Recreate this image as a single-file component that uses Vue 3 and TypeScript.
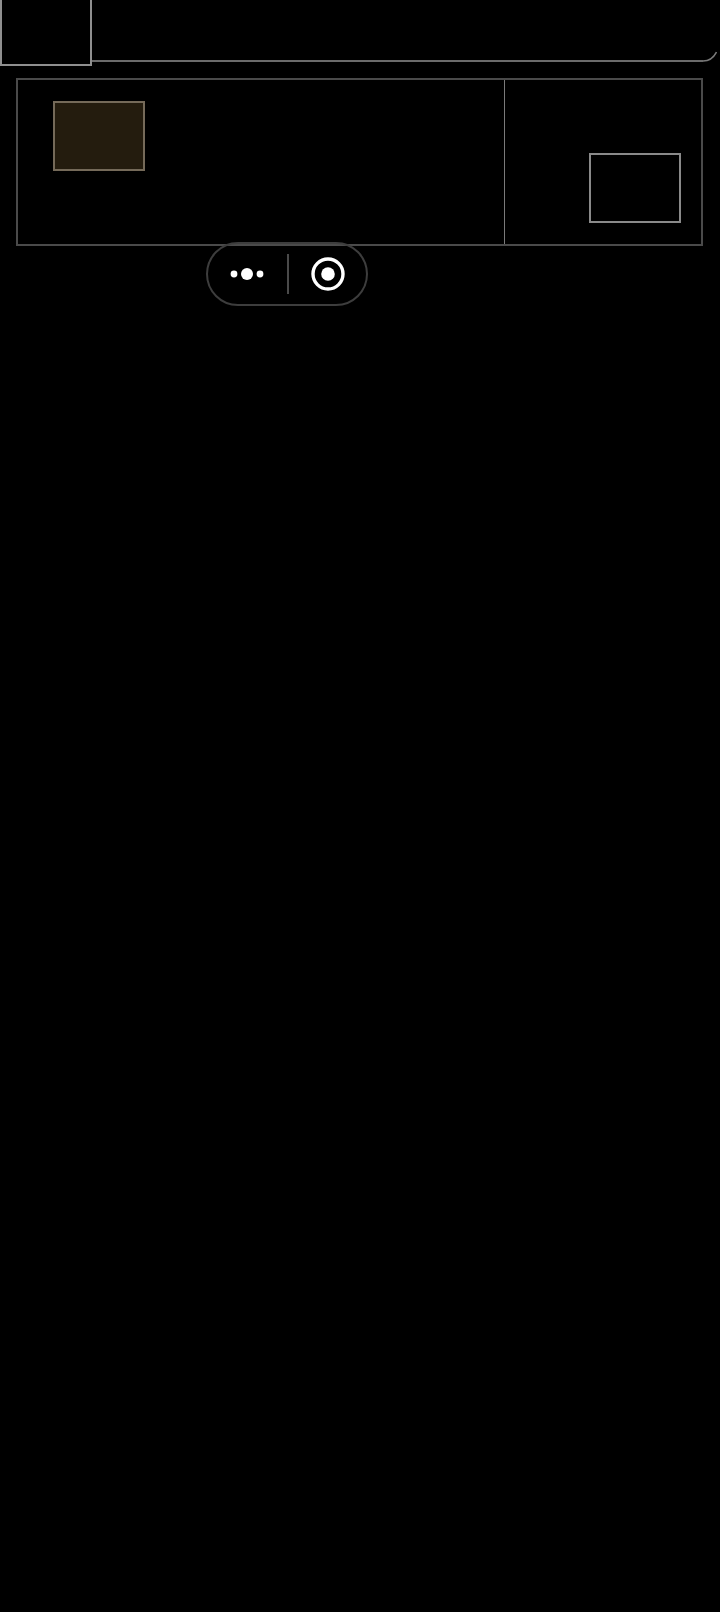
<script setup lang="ts">
</script>

<template>
  <main class="page">
    <header class="top">
      <div class="corner-box"></div>
      <div class="top-line"></div>
      <svg class="top-tail" width="14" height="12" viewBox="0 0 14 12" aria-hidden="true">
        <path d="M0 11 C5 11 10 9 13.5 2" fill="none" stroke="#7a7a7a" stroke-width="1.6" />
      </svg>
    </header>
    <section class="panel">
      <div class="panel-left">
        <div class="tile tile-warm"></div>
      </div>
      <div class="panel-right">
        <div class="tile tile-plain"></div>
      </div>
    </section>
    <div class="capsule">
      <div class="capsule-half capsule-half-more">
        <svg width="36" height="14" viewBox="0 0 36 14" aria-hidden="true">
          <circle cx="5" cy="7" r="3.4" fill="#fff" />
          <circle cx="18" cy="7" r="6" fill="#fff" />
          <circle cx="31" cy="7" r="3.4" fill="#fff" />
        </svg>
      </div>
      <span class="capsule-sep"></span>
      <div class="capsule-half">
        <svg width="36" height="36" viewBox="0 0 36 36" aria-hidden="true">
          <circle cx="18" cy="18" r="15" fill="none" stroke="#fff" stroke-width="3.4" />
          <circle cx="18" cy="18" r="6.8" fill="#fff" />
        </svg>
      </div>
    </div>
  </main>
</template>

<style>
html,
body {
  margin: 0;
  background: #000;
}
</style>

<style scoped>
.page {
  width: 720px;
  height: 1612px;
  background: #000;
  overflow: hidden;
}

.top {
  display: flex;
  align-items: flex-start;
  height: 66px;
  padding-right: 3px;
}

.corner-box {
  box-sizing: border-box;
  width: 92px;
  height: 66px;
  border-right: 2px solid #8f8f8f;
  border-bottom: 2px solid #8f8f8f;
  border-left: 2px solid #8f8f8f;
}

.top-line {
  box-sizing: border-box;
  flex: 1;
  height: 62px;
  border-bottom: 2px solid #6b6b6b;
}

.top-tail {
  margin-top: 50px;
}

.panel {
  box-sizing: border-box;
  display: flex;
  height: 168px;
  margin: 12px 17px 0 16px;
  border: 2px solid #4a4a4a;
}

.panel-left {
  box-sizing: border-box;
  width: 487px;
  padding: 21px 35px;
  border-right: 1px solid #7a7a7a;
}

.panel-right {
  flex: 1;
  display: flex;
  justify-content: flex-end;
  align-items: flex-end;
  padding: 0 20px 21px 0;
}

.tile {
  box-sizing: border-box;
  width: 92px;
  height: 70px;
}

.tile-warm {
  background: #241c0e;
  border: 2px solid #756a59;
}

.tile-plain {
  border: 2px solid #8a8a8a;
}

.capsule {
  box-sizing: border-box;
  display: flex;
  align-items: center;
  width: 162px;
  height: 64px;
  margin: -4px 0 0 206px;
  border: 2px solid #3d3d3d;
  border-radius: 32px;
}

.capsule-half {
  flex: 1;
  display: flex;
  justify-content: center;
  align-items: center;
}

.capsule-half-more {
  padding-right: 2px;
}

.capsule-sep {
  width: 2px;
  height: 40px;
  background: #4a4a4a;
}
</style>
